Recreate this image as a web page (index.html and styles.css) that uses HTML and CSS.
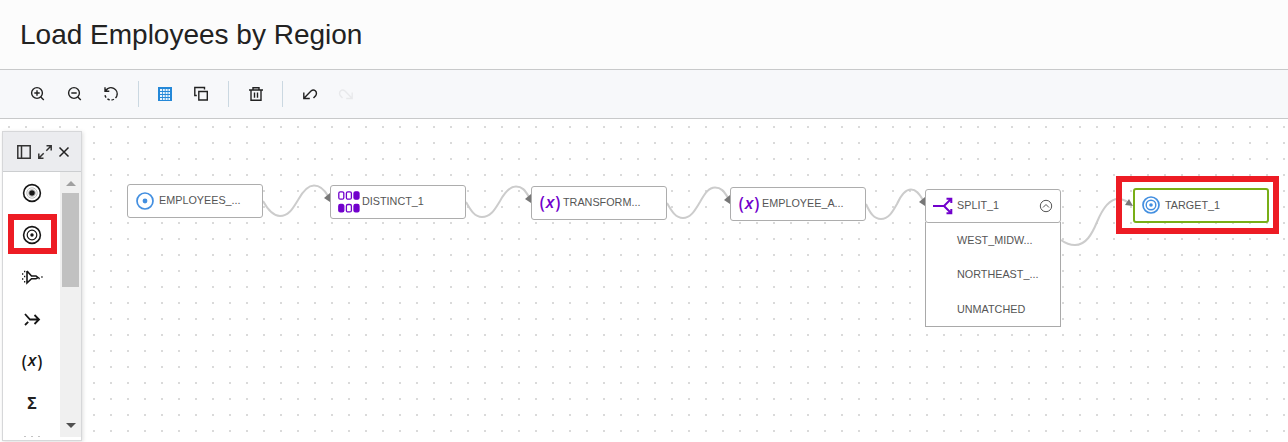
FILE: index.html
```html
<!DOCTYPE html>
<html lang="en">
<head>
<meta charset="utf-8">
<title>Load Employees by Region</title>
<link rel="stylesheet" href="styles.css">
</head>
<body>
<svg class="defs" width="0" height="0">
  <defs>
    <symbol id="source" viewBox="0 0 20 20"><circle cx="10" cy="10" r="8" fill="none" stroke="currentColor" stroke-width="1.7"/><circle cx="10" cy="10" r="2.4" fill="currentColor"/></symbol>
    <symbol id="target" viewBox="0 0 20 20"><g fill="none" stroke="currentColor"><circle cx="10" cy="10" r="8" stroke-width="1.7"/><circle cx="10" cy="10" r="4.8" stroke-width="1.4"/></g><circle cx="10" cy="10" r="1.8" fill="currentColor"/></symbol>
  </defs>
</svg>
<header class="title"><h1>Load Employees by Region</h1></header>
<nav class="toolbar">
  <svg class="tool" viewBox="0 0 16 16"><circle cx="7" cy="7" r="5.400"/><path d="M4.300 7h5.400M7 4.300v5.400M10.800 11l3 3"/></svg>
  <svg class="tool zoom-out" viewBox="0 0 16 16"><circle cx="7" cy="7" r="5.400"/><path d="M4.300 7h5.400M10.800 11l3 3"/></svg>
  <svg class="tool reset" viewBox="0 0 16 16"><path d="M2.800 4.500A6.200 6.200 0 0 1 13.800 10M2 1.200v4h4.300"/><path d="M13.800 10A6.200 6.200 0 0 1 1.800 8" stroke-dasharray="2.500 1.800"/></svg>
  <i class="divider"></i>
  <svg class="tool grid" viewBox="0 0 16 16"><path class="fill" d="M1 1h14v14H1z"/><path class="cells" d="M3 4h10M3 7h10M3 10h10M3 13h10" stroke-width="2" stroke-dasharray="2 .8"/></svg>
  <svg class="tool copy" viewBox="0 0 16 16"><path d="M3.800 9.500H1.800v-8h9.700v2M5.800 5.500h8.500v8.500H5.800z"/></svg>
  <i class="divider"></i>
  <svg class="tool trash" viewBox="0 0 16 16"><path d="M1 4h14M5 4V1.800h6V4M3 4v10.300h10V4M6.500 6.500v5.300M9.500 6.500v5.300"/></svg>
  <i class="divider"></i>
  <svg class="tool undo" viewBox="0 0 16 16"><path d="M1.800 6.500v6h6M2 12.300l7-7.200c3-2.700 6.800.5 4.800 4.400L11.500 12"/></svg>
  <svg class="tool redo" viewBox="0 0 16 16"><path d="M14.200 6.500v6h-6M14 12.300L7 5.100C4 2.400.2 5.600 2.200 9.500L4.500 12"/></svg>
</nav>
<main class="canvas">
  <svg class="links" viewBox="0 0 1288 322">
    <path d="M263 82C268 91 273 97 280 97C289 97 293 89 298 81C303 72 308 66.500 314 66.500C320 66.500 324 70 328 77"/>
    <path d="M466 83C471 92 475 98 482 98C491 98 495 90 500 82C505 73 510 67.500 516 67.500C522 67.500 525 71 529 78"/>
    <path d="M667 84C672 93 676 99 683 99C691 99 695 91 700 83C705 74 709 68.500 715 68.500C721 68.500 724 72 728 79"/>
    <path d="M866 85C870 94 874 100 881 100C889 100 893 92 897 85C901 76 905 70.500 911 70.500C916 70.500 919 74 923 81"/>
    <path d="M1061 121C1065 124 1069 126 1075 126C1086 126 1092 115 1097 103C1102 91 1109 80 1118 80C1122 80 1125 81 1129 84"/>
    <path class="arrow" d="M324 79l6-5v9z"/><path class="arrow" d="M525 80l6-5v9z"/><path class="arrow" d="M724 81l6-5v9z"/><path class="arrow" d="M919 83l6-5v9z"/><path class="arrow" d="M1125 86l4-6 4 7z"/>
  </svg>
  <div class="node employees"><svg class="dot-icon"><use href="#source"/></svg><span>EMPLOYEES_...</span></div>
  <div class="node distinct"><svg class="distinct-icon" viewBox="0 0 22 22"><g><rect x=".8" y=".8" width="5" height="7.400" rx="1.500"/><rect x="8.400" y=".8" width="5" height="7.400" rx="1.500"/><rect class="solid" x="16" y=".8" width="5" height="7.400" rx="1.500"/><rect class="solid" x=".8" y="13.500" width="5" height="7.400" rx="1.500"/><rect x="8.400" y="13.500" width="5" height="7.400" rx="1.500"/><rect class="solid" x="16" y="13.500" width="5" height="7.400" rx="1.500"/></g></svg><span>DISTINCT_1</span></div>
  <div class="node transform"><b class="fx"><span>(</span><i>x</i><span>)</span></b><span>TRANSFORM...</span></div>
  <div class="node employee-a"><b class="fx"><span>(</span><i>x</i><span>)</span></b><span>EMPLOYEE_A...</span></div>
  <div class="outputs"><span>WEST_MIDW...</span><span>NORTHEAST_...</span><span>UNMATCHED</span></div>
  <div class="node split"><svg class="split-icon" viewBox="0 0 20 18"><path d="M0 9h11L18 2M11 9l7 7M13.500 1.700H18.300V6M13.500 16.300H18.300V12"/></svg><span>SPLIT_1</span><svg class="collapse" viewBox="0 0 14 14"><circle cx="7" cy="7" r="5.700"/><path d="M4 8.500l3-3 3 3"/></svg></div>
  <div class="node target"><svg class="dot-icon"><use href="#target"/></svg><span>TARGET_1</span></div>
  <i class="mark mark-target"></i>
  <aside class="palette">
    <div class="palette-head">
      <svg viewBox="0 0 16 16"><path d="M1.800 1.800h12.400v12.400H1.800zM5.500 2v12"/></svg>
      <svg viewBox="0 0 16 16"><path d="M9.500 1.800h4.700v4.700M14 2L9.300 6.700M6.500 14.200H1.800V9.500M2 14l4.700-4.700"/></svg>
      <svg class="close" viewBox="0 0 16 16"><path d="M3.500 3.500l9 9M12.500 3.500l-9 9"/></svg>
    </div>
    <div class="palette-body">
      <div class="operators">
        <svg viewBox="0 0 20 20"><circle cx="10" cy="10" r="8.400"/><circle class="halo" cx="10" cy="10" r="5.200"/><circle class="halo" cx="10" cy="10" r="3.500"/><circle class="dark" cx="10" cy="10" r="2.800"/></svg>
        <svg viewBox="0 0 20 20"><circle cx="10" cy="10" r="8.400"/><circle cx="10" cy="10" r="4.800" stroke-width="1.200"/><circle class="dark" cx="10" cy="10" r="1.700"/></svg>
        <svg class="filter" viewBox="0 0 22 16"><path d="M6 2v12L10.500 9.700H15l2-1-2-1.700h-4.500L6 2"/><path class="specks" d="M3 2.500h1.300M1 5h1.300M3 7.500h1.300M1 10h1.300M3 12.700h1.300M17.500 9.500h1.300M20.300 8h1.300"/></svg>
        <svg class="join" viewBox="0 0 20 20"><path d="M3 5l5 5.500h9M3 16l3.200-3.200M12.500 6l4.500 4.500-4.500 4.500"/></svg>
        <b class="fx"><span>(</span><i>x</i><span>)</span></b>
        <b class="sigma">Σ</b>
        <span class="more"><i></i><i></i><i></i></span>
      </div>
      <div class="scrollbar"><i class="up"></i><i class="thumb"></i><i class="down"></i></div>
    </div>
  </aside>
  <i class="mark mark-palette"></i>
</main>
</body>
</html>
```
FILE: styles.css
```css
* { box-sizing: border-box; }
body { margin: 0; width: 1288px; height: 442px; overflow: hidden; font-family: "Liberation Sans", Arial, sans-serif; color: #222; background: #fff; }
.defs { position: absolute; }
.title { height: 69px; padding: 18px 20px; background: #fcfcfc; }
h1 { margin: 0; font-size: 28px; line-height: 34px; font-weight: 400; white-space: nowrap; }
.toolbar { height: 50px; display: flex; align-items: center; padding-left: 30px; background: #f7f8fa; border-top: 1px solid #c8c9ca; border-bottom: 1px solid #c8c9ca; }
.tool { width: 16px; height: 16px; fill: none; stroke: #222; stroke-width: 1.4; }
.zoom-out { margin-left: 21px; }
.reset { margin: 0 19px 0 20px; }
.divider { width: 1px; height: 26px; background: #cbd8e1; }
.grid { margin-left: 18px; stroke: none; }
.fill { fill: #2488d8; }
.cells { stroke: #eaf5fd; }
.copy { margin: 0 19px 0 20px; }
.trash { margin: 0 18px 0 19px; }
.undo { margin-left: 19px; }
.redo { margin-left: 20px; stroke: #e8e9eb; }
.canvas { position: relative; height: 323px; background-color: #fff; background-image: conic-gradient(from 90deg at 15px 14px, #dadada 90deg, transparent 0); background-size: 17px 16px; background-position: -7px -7px; }
.links { position: absolute; left: 0; top: 0; width: 1288px; height: 322px; fill: none; stroke: #ccc; stroke-width: 2; }
.links .arrow { fill: #777; stroke: none; }
.node { position: absolute; width: 136px; height: 34px; display: flex; align-items: center; border: 1px solid #adadad; border-radius: 3px; background: #fff; font-size: 10.8px; color: #555; white-space: nowrap; }
.node > span { margin-top: -2px; }
.employees { left: 127px; top: 65px; }
.distinct { left: 330px; top: 66px; }
.transform { left: 531px; top: 67px; }
.employee-a { left: 730px; top: 68px; }
.split { left: 925px; top: 70px; }
.target { left: 1133px; top: 69px; height: 35px; border: 2px solid #78ae17; }
.dot-icon { width: 20px; height: 20px; margin: -1px 4px 0 7px; color: #438fe0; flex: none; }
.target .dot-icon { margin-left: 6px; }
.distinct-icon { width: 22px; height: 22px; margin: -1px 2px 0 7px; fill: #fff; stroke: #7100cc; stroke-width: 1.3; }
.distinct-icon .solid { fill: #7100cc; }
.fx { display: flex; align-items: center; justify-content: center; gap: 1px; width: 20px; font: 600 16px/18px "Open Sans", sans-serif; }
.fx span { transform: scaleY(1.15); }
.fx i { font-weight: 600; font-size: 17px; margin-top: -1px; }
.node .fx { margin: -2px 3px 0 8px; color: #7100cc; }
.operators .fx { margin-top: -1px; color: #161616; }
.split-icon { width: 20px; height: 18px; margin: -1px 4px 0 7px; fill: none; stroke: #7100cc; stroke-width: 2; }
.collapse { width: 14px; height: 14px; margin-left: auto; margin-right: 7px; fill: none; stroke: #555; }
.outputs { position: absolute; left: 925px; top: 103px; width: 136px; height: 105px; display: grid; grid-template-rows: 34px 34px 35px; align-items: center; padding: 1px 0 0 31px; border: 1px solid #a9a9a9; border-top: 0; background: #fff; font-size: 10.8px; color: #555; }
.mark { position: absolute; border: 6px solid #ed1c24; }
.mark-target { left: 1116px; top: 57px; width: 163px; height: 58px; }
.mark-palette { left: 8px; top: 95px; width: 49px; height: 40px; }
.palette { position: absolute; left: 2px; top: 12px; width: 80px; height: 310px; border: 1px solid #d6d7d9; box-shadow: 1px 1px 4px #0002; background: #fff; }
.palette-head { height: 40px; display: flex; align-items: center; gap: 5px; padding-left: 13px; background: #ebecef; border-bottom: 1px solid #ccced0; }
.palette-head svg { width: 16px; height: 16px; fill: none; stroke: #333; stroke-width: 1.5; }
.palette-head .close { margin-left: -2px; stroke: #222; }
.palette-body { display: flex; height: 265px; }
.operators { width: 57px; padding-left: 1px; display: grid; grid-template-rows: repeat(6, 42px) 13px; place-items: center; overflow: hidden; }
.operators svg { width: 20px; height: 20px; fill: none; stroke: #161616; stroke-width: 1.6; }
.operators .dark { fill: #161616; stroke: none; }
.operators .halo { stroke: #bbb; stroke-width: 1; }
.operators .filter { width: 22px; height: 16px; stroke-width: 1.6; }
.operators .join { stroke-width: 1.8; }
.sigma { font: bold 16px/18px "Open Sans", sans-serif; }
.more { display: flex; gap: 5px; align-self: end; }
.more i { width: 2px; height: 1px; background: #c4c4c4; }
.scrollbar { width: 21px; display: flex; flex-direction: column; align-items: center; background: #f0f0f0; }
.up, .down { width: 0; height: 0; border: 5px solid transparent; border-top: 0; border-bottom: 5px solid #a0a0a0; margin-top: 9px; }
.thumb { width: 17px; height: 94px; margin-top: 7px; background: #c1c1c1; }
.down { margin: auto 0 9px; border-bottom: 0; border-top: 5px solid #505050; }
```
